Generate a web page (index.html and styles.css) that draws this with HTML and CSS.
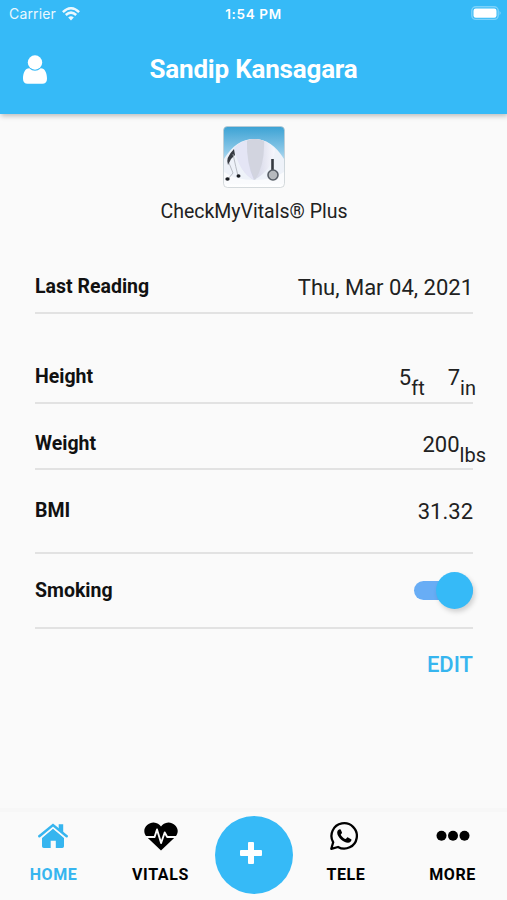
FILE: index.html
```
<!DOCTYPE html>
<html lang="en">
<head>
  <meta charset="utf-8">
  <title>CheckMyVitals Plus</title>
  <link rel="stylesheet" href="styles.css">
</head>
<body>
  <header class="header">
    <div class="status-bar">
      <div class="carrier">
        <span>Carrier</span>
        <svg width="18" height="14" viewBox="0 0 18 14" fill="none" stroke="#fff" stroke-width="2.5">
          <path d="M.9 5.1Q9-2.5 17.1 5.1"/>
          <path d="M3.8 8Q9 3.2 14.2 8"/>
          <path d="M9 13.4 6.2 10.5Q9 8 11.8 10.5Z" fill="#fff" stroke="none"/>
        </svg>
      </div>
      <span class="clock">1:54 PM</span>
      <svg class="battery" width="31" height="15" viewBox="0 0 31 15">
        <rect x=".8" y=".8" width="26.4" height="12.6" rx="4" fill="none" stroke="#fff" stroke-opacity=".35" stroke-width="1.4"/>
        <rect x="2.5" y="2.5" width="23" height="9.2" rx="2.2" fill="#fff"/>
        <path d="M28.6 5q2 2 0 4.200z" fill="#fff" fill-opacity=".45"/>
      </svg>
    </div>
    <div class="title-bar">
      <svg class="user-icon" width="24" height="29" viewBox="0 0 24 29" fill="#fff">
        <path d="M6.300 13.200C2 13.200 0 18.200 0 23.700 0 27 1.800 28.800 4.600 28.800H19.400C22.200 28.800 24 27 24 23.700 24 18.200 22 13.200 17.700 13.200 16 14.900 14 15.700 12 15.700S8 14.900 6.300 13.200Z"/>
        <circle cx="12" cy="7.500" r="7.200"/>
      </svg>
      <h1>Sandip Kansagara</h1>
    </div>
  </header>

  <main class="content">
    <div class="brand">
      <svg width="62" height="62" viewBox="0 0 62 62">
        <defs>
          <linearGradient id="sky" x1="0" y1="0" x2="0" y2="1">
            <stop offset="0" stop-color="#3ba2d4"/>
            <stop offset=".4" stop-color="#8cc8e8"/>
            <stop offset=".8" stop-color="#f5f9fc"/>
            <stop offset="1" stop-color="#fff"/>
          </linearGradient>
          <linearGradient id="dome" x1="0" y1="0" x2="1" y2="0">
            <stop offset="0" stop-color="#f2f4fb"/>
            <stop offset=".45" stop-color="#cfd1e3"/>
            <stop offset="1" stop-color="#f7f7fd"/>
          </linearGradient>
        </defs>
        <rect x=".5" y=".5" width="61" height="61" rx="4" fill="url(#sky)" stroke="#c3cbce" stroke-opacity=".7"/>
        <path d="M1 33Q13 13 31 13T61 33V58H1Z" fill="#eef2f9"/>
        <path d="M1 46Q12 54 31 54T61 46V58H1Z" fill="#fafbfd"/>
        <path d="M11 22Q21 13 32 13T52 23Q50 44 31 54 16 46 11 22Z" fill="url(#dome)"/>
        <path d="M24 15Q32 11 41 15 42 39 32 54 23 36 24 15Z" fill="#d2d4df"/>
        <path d="M24 15Q23 37 31 54 16 46 11 22Q16 16 24 15Z" fill="#e4e5f5"/>
        <path d="M11 23Q2 32 5 39L8 33 12 29Z" fill="#363a42"/>
        <path d="M6 37 10 47 5 53M10 28Q13 42 15 50" fill="none" stroke="#a9adb5" stroke-width=".8"/>
        <ellipse cx="4.500" cy="53" rx="2.200" ry="1.800" fill="#181b20"/>
        <ellipse cx="15.500" cy="50" rx="2" ry="1.700" fill="#181b20"/>
        <path d="M49.500 33V44" stroke="#343941" stroke-width="2.600"/>
        <circle cx="50" cy="49" r="5" fill="#b6b9bd" stroke="#585e66" stroke-width="1.600"/>
      </svg>
      <p>CheckMyVitals® Plus</p>
    </div>

    <div class="row row-reading">
      <span class="label">Last Reading</span>
      <span class="value">Thu, Mar 04, 2021</span>
    </div>
    <div class="row row-height">
      <span class="label">Height</span>
      <span class="value value-height"><span>5<span class="unit">ft</span></span><span>7<span class="unit">in</span></span></span>
    </div>
    <div class="row row-weight">
      <span class="label">Weight</span>
      <span class="value value-weight">200<span class="unit">lbs</span></span>
    </div>
    <div class="row row-bmi">
      <span class="label">BMI</span>
      <span class="value">31.32</span>
    </div>
    <div class="row row-smoking">
      <span class="label">Smoking</span>
      <span class="toggle"><span class="thumb"></span></span>
    </div>
    <a class="edit">EDIT</a>
  </main>

  <nav class="tabs">
    <a class="tab tab-home active">
      <svg width="30" height="26" viewBox="0 0 30 26" fill="currentColor">
        <path d="M15 5.800 26 15V23.200Q26 25 24.300 25H17.800V17.800H12.700V25H5.800Q4 25 4 23.200V15Z"/>
        <path d="M1.300 13.200 15 2 28.700 13.200" fill="none" stroke="#fafafa" stroke-width="5"/>
        <path d="M1.300 13.200 15 2 28.700 13.200" fill="none" stroke="currentColor" stroke-width="2.500" stroke-linecap="round"/>
        <path d="M20.700 1.300H25.200V10.500L20.700 6.900Z"/>
      </svg>
      <span>HOME</span>
    </a>
    <a class="tab tab-vitals">
      <svg width="34" height="29" viewBox="0 0 34 29">
        <path d="M17 28.500 2.800 15C-3.600 7.600 3.500.2 9.700.4 13 .5 15.500 2.300 17 4.600 18.500 2.300 21 .5 24.300.4 30.500.2 37.600 7.600 31.200 15Z" fill="#000"/>
        <path d="M0 15H10.600L13 7.500 17.100 21 20.700 10.500 23.200 15H34" fill="none" stroke="#fafafa" stroke-width="1.900" stroke-linejoin="round"/>
      </svg>
      <span>VITALS</span>
    </a>
    <a class="add">
      <svg width="24" height="24" viewBox="0 0 24 24" fill="#fff">
        <path d="M10 1H14Q15 1 15 2V9H22Q23 9 23 10V14Q23 15 22 15H15V22Q15 23 14 23H10Q9 23 9 22V15H2Q1 15 1 14V10Q1 9 2 9H9V2Q9 1 10 1Z"/>
      </svg>
    </a>
    <a class="tab tab-tele">
      <svg width="28" height="28" viewBox="0 0 28 28">
        <path d="M1.300 26.800 3.200 20.300A12.700 12.700 0 1 1 8 25Z" fill="none" stroke="#000" stroke-width="2.300" stroke-linejoin="round"/>
        <path d="M9.700 7.200C8.200 7.400 7 9 7.200 11 7.600 15.400 13.300 20.600 18 20.700 20 20.700 21.500 19.200 21.500 17.400L17.700 15.300C17 15.100 16.200 17.100 15.500 17.100 13.800 16.700 11.400 14.200 10.800 12.800 10.700 12.100 12.300 11.200 12 10.400L10.700 7.500Q10.400 7.100 9.700 7.200Z" fill="#000"/>
      </svg>
      <span>TELE</span>
    </a>
    <a class="tab tab-more">
      <svg width="34" height="12" viewBox="0 0 34 12">
        <circle cx="5.500" cy="5.700" r="5"/>
        <circle cx="17" cy="5.700" r="5"/>
        <circle cx="28.500" cy="5.700" r="5"/>
      </svg>
      <span>MORE</span>
    </a>
  </nav>
</body>
</html>
```
FILE: styles.css
```
* {
  box-sizing: border-box;
}
body {
  display: flex;
  flex-direction: column;
  height: 900px;
  margin: 0;
  font-family: Roboto, sans-serif;
  color: #212121;
  background: #fafafa;
}
.header {
  height: 114px;
  color: #fff;
  background: #36baf7;
  box-shadow: 1px 2px 5px rgba(0, 0, 0, 0.25);
}
.status-bar {
  display: grid;
  grid-template-columns: 1fr auto 1fr;
  align-items: center;
  height: 27px;
  padding: 0 5px 0 9px;
  font-family: Inter, sans-serif;
  font-size: 14px;
}
.carrier {
  display: flex;
  align-items: center;
  gap: 6px;
  letter-spacing: 0.15px;
  opacity: 0.9;
}
.clock {
  margin-right: 4px;
  font-size: 13.5px;
  font-weight: 600;
  letter-spacing: 0.65px;
}
.battery {
  justify-self: end;
}
.title-bar {
  display: grid;
  grid-template-columns: 1fr auto 1fr;
  align-items: center;
  height: 84px;
  padding: 0 23px;
}
h1 {
  margin: 0;
  font-size: 26px;
  font-weight: 700;
  letter-spacing: -0.2px;
}
.content {
  flex: 1;
  padding: 12px 34px 0 35px;
}
.brand {
  display: flex;
  flex-direction: column;
  align-items: center;
  height: 135px;
}
.brand p {
  margin: 12px 0 0;
  font-size: 19.5px;
  line-height: 24px;
}
.row {
  display: flex;
  justify-content: space-between;
  align-items: center;
  border-bottom: 2px solid #e2e2e2;
}
.row-reading {
  height: 53px;
}
.row-height {
  height: 53px;
  margin-top: 37px;
}
.row-weight {
  height: 66px;
  padding-top: 14px;
}
.row-bmi {
  height: 84px;
  padding-bottom: 2px;
}
.row-smoking {
  height: 75px;
  padding-bottom: 1px;
}
.label {
  font-size: 19.5px;
  font-weight: 700;
  color: #111;
}
.value {
  padding-top: 2px;
  font-size: 22px;
}
.value-height {
  display: flex;
  gap: 23px;
  margin-right: -3px;
}
.value-weight {
  margin-right: -13px;
}
.unit {
  position: relative;
  top: 10px;
  font-size: 20px;
}
.toggle {
  display: flex;
  justify-content: flex-end;
  align-items: center;
  width: 59px;
  height: 19px;
  border-radius: 10px;
  background: #68adf5;
}
.thumb {
  width: 37px;
  height: 37px;
  border-radius: 50%;
  background: #36baf7;
  box-shadow: 2px 3px 5px rgba(0, 0, 0, 0.17);
}
.edit {
  display: block;
  margin-top: 22px;
  font-size: 22px;
  font-weight: 500;
  line-height: 28px;
  text-align: right;
  color: #36b5ef;
}
.tabs {
  display: grid;
  grid-template-columns: 107px 107px 80px 104px 109px;
  height: 92px;
  border-top: 4px solid #f7f7f7;
}
.tab {
  display: grid;
  grid-template-rows: 48px 28px;
  justify-items: center;
  align-items: center;
  align-content: start;
  font-size: 16px;
  font-weight: 700;
  letter-spacing: 0.6px;
  color: #000;
}
.tab.active {
  color: #36b5ef;
}
.tab-home svg {
  margin-right: 1px;
}
.tab-tele svg {
  margin-right: 4px;
}
.add {
  display: flex;
  justify-content: center;
  align-items: center;
  width: 78px;
  height: 78px;
  margin: 4px 0 0 1px;
  padding: 0 6px 4px 0;
  border-radius: 50%;
  background: #36baf7;
}
```
